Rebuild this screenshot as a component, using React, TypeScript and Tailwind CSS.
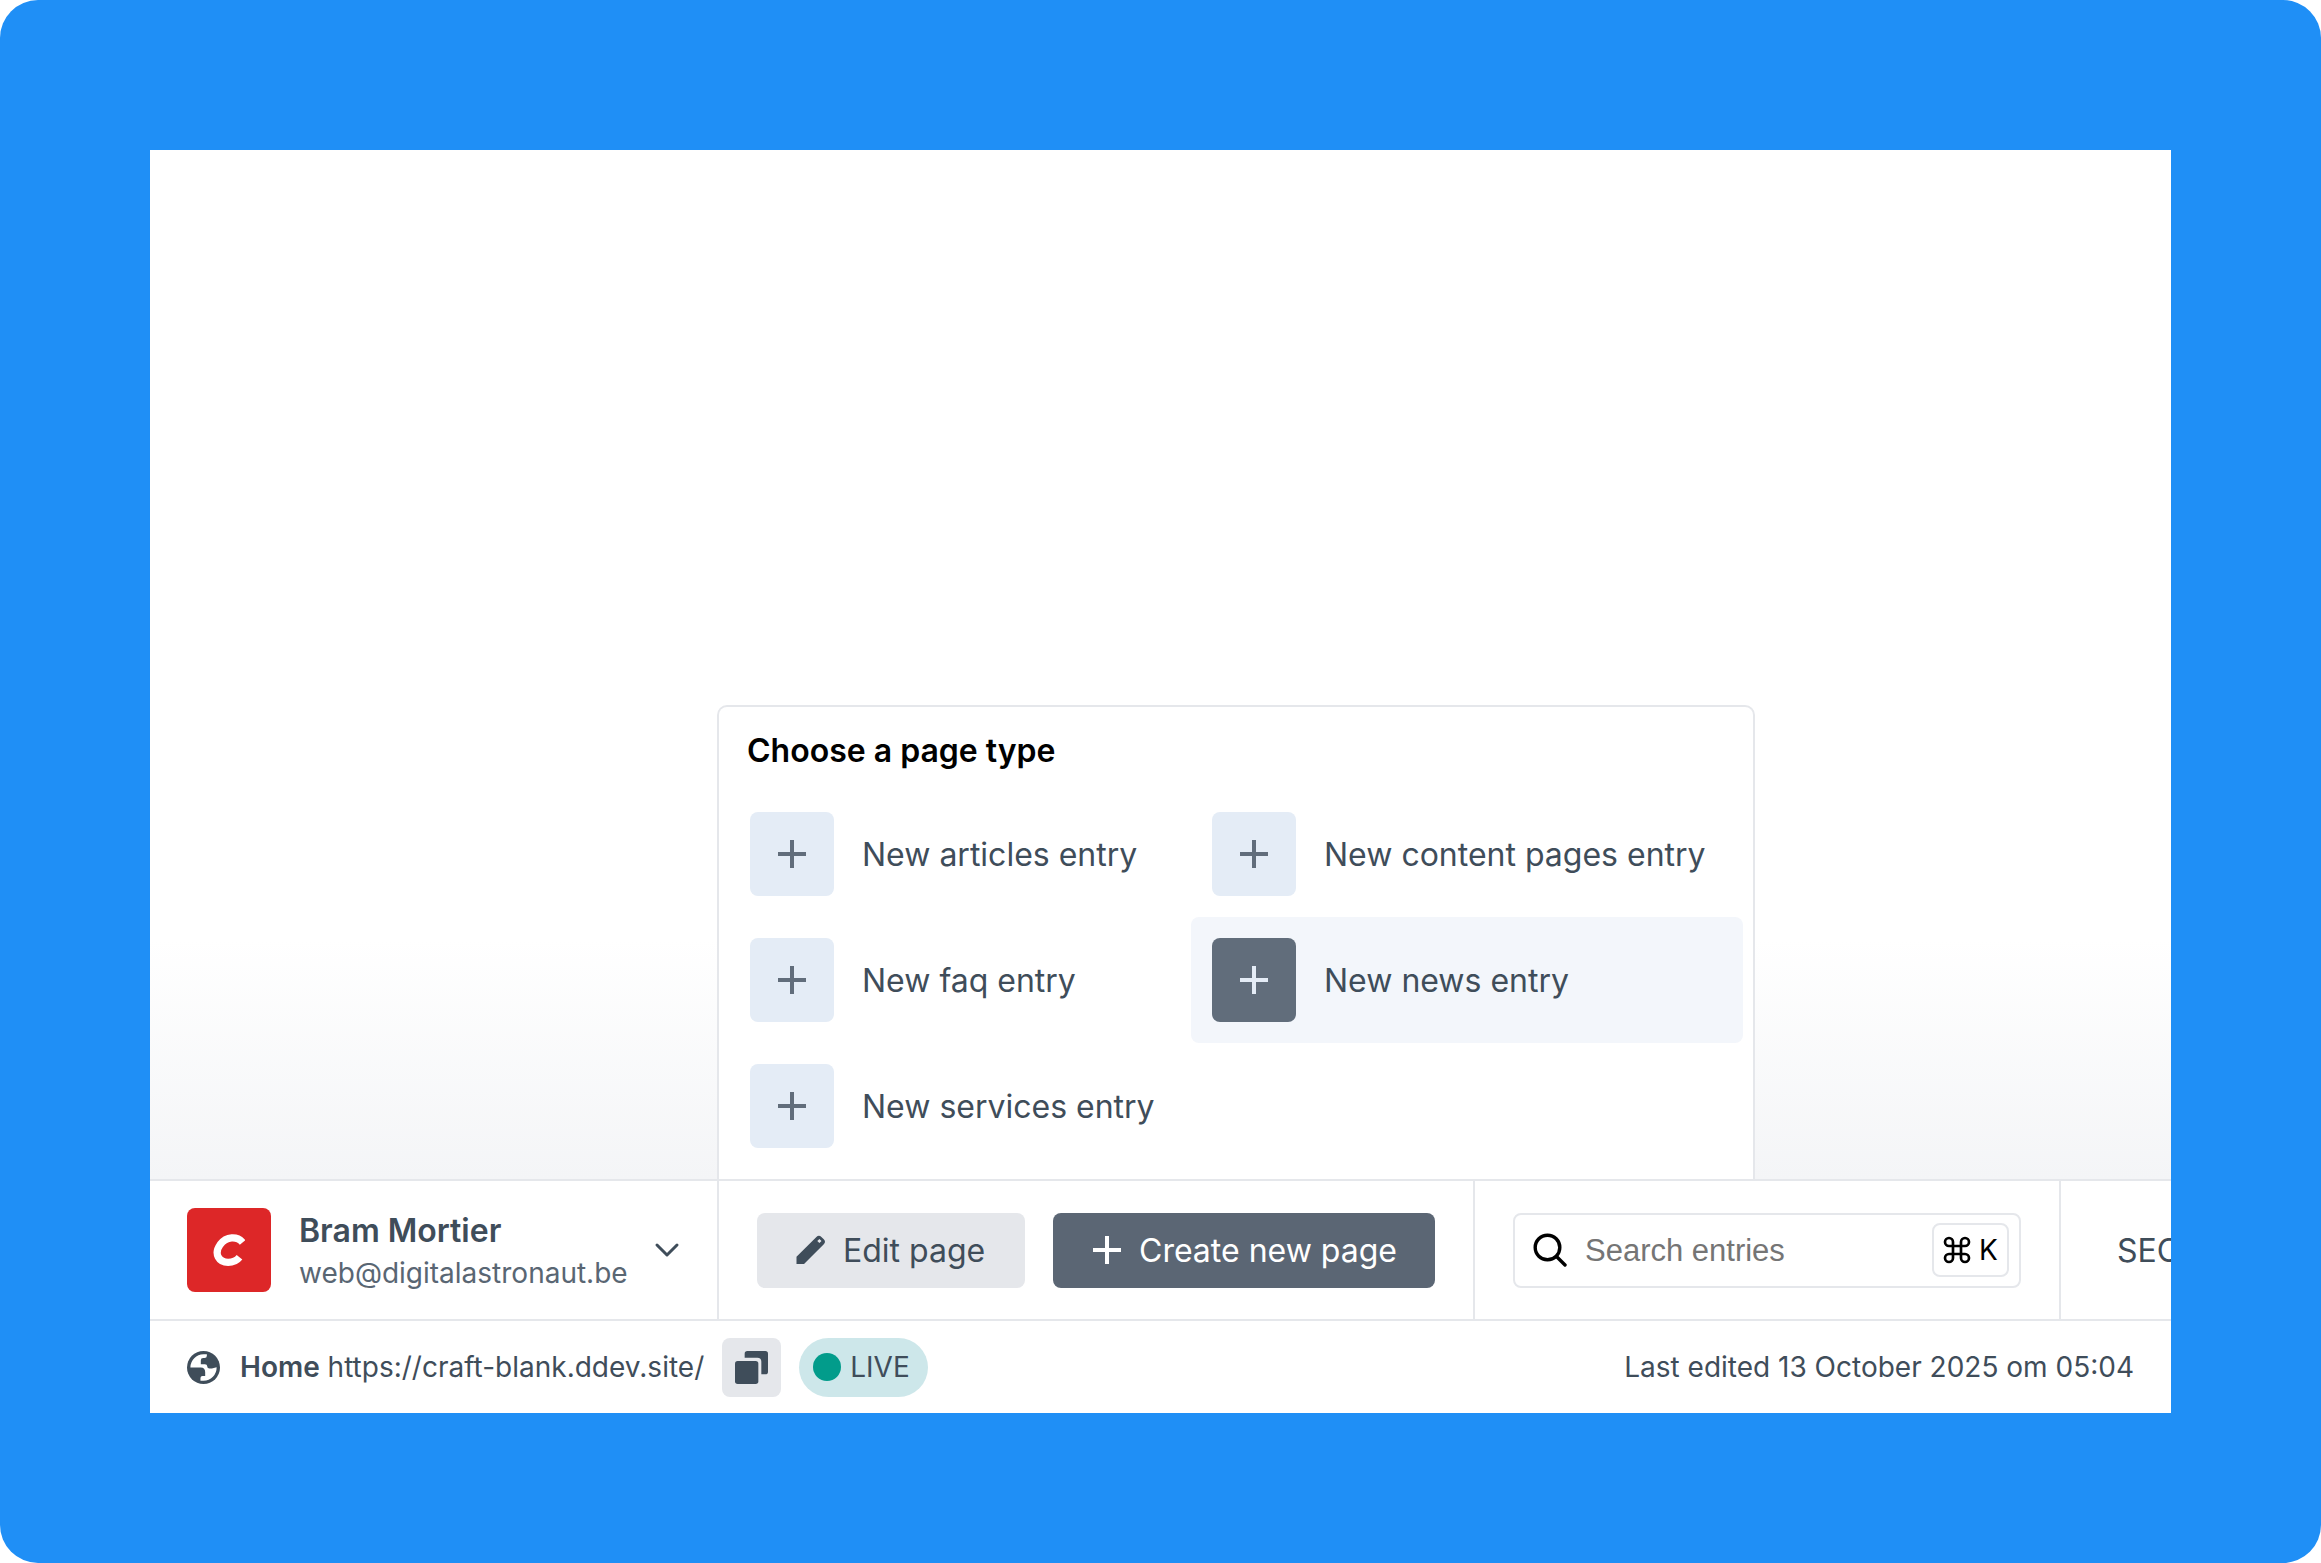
import React from "react";
import { Command } from "lucide-react";

function PlusIcon({ className }: { className?: string }) {
  return (
    <svg viewBox="0 0 32 32" className={className} fill="none" stroke="currentColor" strokeWidth="4" aria-hidden="true">
      <path d="M16 2v28M2 16h28" />
    </svg>
  );
}

function PencilIcon() {
  return (
    <svg viewBox="0 0 32 32" className="size-8 shrink-0" fill="currentColor" fillRule="evenodd" aria-hidden="true">
      <path d="M1.5 30V22.7L21.4 2.9a3.6 3.6 0 0 1 5 0l2.4 2.4a3.6 3.6 0 0 1 0 5L9 30ZM24.4 4.9l-2.1 2.1 2.1 2.1 2.1-2.1Z" />
    </svg>
  );
}

function CraftLogo() {
  return (
    <svg viewBox="0 0 93 92" className="size-8" fill="none" stroke="currentColor" strokeWidth="21" aria-hidden="true">
      <path d="M86 24C70 5 39 6 21 30C1 58 18 82 44 82C58 82 69 77 77 67" />
    </svg>
  );
}

function ChevronIcon() {
  return (
    <svg viewBox="0 0 28 16" className="h-4 w-7" fill="none" stroke="currentColor" strokeWidth="3" strokeLinecap="round" strokeLinejoin="round" aria-hidden="true">
      <path d="M4 3l10 10 10-10" />
    </svg>
  );
}

function SearchIcon() {
  return (
    <svg viewBox="0 0 34 34" className="size-[34px] shrink-0" fill="none" stroke="currentColor" strokeWidth="3.4" strokeLinecap="round" aria-hidden="true">
      <circle cx="14.5" cy="14.5" r="12.3" />
      <path d="M23.5 23.5l8.5 8.5" />
    </svg>
  );
}

function GlobeIcon() {
  return (
    <svg viewBox="0 0 98 98" className="size-[33px] shrink-0" aria-hidden="true">
      <circle cx="49" cy="49" r="49" fill="currentColor" />
      <path
        fill="white"
        d="M10 49A39 39 0 0 1 49 10H59V14Q59 21 52 21H48Q41 21 41 28V39H53Q60 39 60 45Q60 52 67 52H74L88 48A39 39 0 0 1 49 88H40V80Q40 74 46 74H54V63Q54 49 41 49Z"
      />
    </svg>
  );
}

function CopyIcon() {
  return (
    <svg viewBox="0 0 99 99" className="size-[33px]" fill="currentColor" aria-hidden="true">
      <rect x="0" y="30" width="70" height="69" rx="8" />
      <path d="M29 20V8Q29 0 37 0H91Q99 0 99 8V62Q99 70 91 70H79V32Q79 20 67 20Z" />
    </svg>
  );
}

const pageTypes = [
  { label: "New articles entry", active: false },
  { label: "New content pages entry", active: false },
  { label: "New faq entry", active: false },
  { label: "New news entry", active: true },
  { label: "New services entry", active: false },
];

function PageTypeMenu() {
  return (
    <div className="absolute bottom-[calc(100%+2px)] -left-0.5 w-[1038px] rounded-t-[10px] border-2 border-b-0 border-[#e5e7eb] bg-white px-2.5 pt-6 pb-2.5">
      <h2 className="px-[18px] leading-10 font-semibold text-black">Choose a page type</h2>
      <div className="mt-5 grid grid-cols-[462fr_552fr]">
        {pageTypes.map((type) => (
          <button
            key={type.label}
            type="button"
            className={`flex items-center gap-7 rounded-lg p-[21px] text-left ${type.active ? "bg-[#f3f6fb]" : ""}`}
          >
            <span
              className={`flex size-[84px] shrink-0 items-center justify-center rounded-lg ${
                type.active ? "bg-[#616d7b] text-[#e4ecf6]" : "bg-[#e4ecf6] text-[#616d7b]"
              }`}
            >
              <PlusIcon className="size-8" />
            </span>
            <span className="pt-0.5 whitespace-nowrap">{type.label}</span>
          </button>
        ))}
      </div>
    </div>
  );
}

export default function App() {
  return (
    <div className="flex min-h-screen flex-col rounded-[38px] bg-[#1f8ff6] p-[150px] font-['Inter',sans-serif] text-[32px] leading-10 text-[#3f4d5a]">
      <div className="flex grow flex-col overflow-hidden bg-white">
        <main className="flex grow flex-col justify-end">
          <div className="h-60 bg-linear-to-b from-white to-[#f4f5f7]" />
        </main>

        <div className="flex h-[142px] border-y-2 border-[#e5e7eb] bg-white">
          <button type="button" className="flex w-[569px] shrink-0 items-center border-r-2 border-[#e5e7eb] pr-9 pl-[37px] text-left">
            <span className="flex size-[84px] shrink-0 items-center justify-center rounded-lg bg-[#dd2728] text-white">
              <CraftLogo />
            </span>
            <span className="ml-7 flex grow flex-col pt-1">
              <span className="leading-[42px] font-semibold">Bram Mortier</span>
              <span className="text-[28px] leading-[42px] text-[#596673]">web@digitalastronaut.be</span>
            </span>
            <ChevronIcon />
          </button>

          <div className="relative flex shrink-0 items-center gap-7 border-r-2 border-[#e5e7eb] px-[38px]">
            <PageTypeMenu />
            <a href="#edit" className="flex h-[75px] w-[268px] items-center gap-4 rounded-lg bg-[#e5e7eb] px-[38px] whitespace-nowrap">
              <PencilIcon />
              <span className="pt-0.5">Edit page</span>
            </a>
            <button type="button" className="flex h-[75px] items-center gap-4 rounded-lg bg-[#5b6674] px-[38px] whitespace-nowrap text-white">
              <PlusIcon className="size-8" />
              <span className="pt-0.5">Create new page</span>
            </button>
          </div>

          <div className="flex shrink-0 items-center border-r-2 border-[#e5e7eb] px-[38px]">
            <label className="flex h-[75px] w-[508px] items-center rounded-lg border-2 border-[#e5e7eb] pr-2.5 pl-[18px] text-black">
              <SearchIcon />
              <input
                type="text"
                aria-label="Search entries"
                placeholder="Search entries"
                className="ml-[18px] min-w-0 grow pt-0.5 font-['Liberation_Sans',sans-serif] text-[31px] outline-none placeholder:text-[#757575]"
              />
              <kbd className="flex h-[54px] w-[77px] shrink-0 items-center justify-center gap-1.5 rounded-lg border-2 border-[#e5e7eb] pr-0.5 font-['Inter',sans-serif] text-[28px]">
                <Command className="size-8" strokeWidth={2} aria-hidden="true" />
                K
              </kbd>
            </label>
          </div>

          <div className="flex shrink-0 items-center px-14">
            <a href="#seo" className="pt-0.5">SEO</a>
          </div>
        </div>

        <footer className="flex h-[92px] items-center bg-white px-[37px] text-[28px]">
          <GlobeIcon />
          <p className="ml-5 whitespace-nowrap">
            <strong className="font-semibold">Home</strong> https://craft-blank.ddev.site/
          </p>
          <button type="button" aria-label="Copy URL" className="ml-[18px] flex size-[59px] items-center justify-center rounded-lg bg-[#e5e7eb]">
            <CopyIcon />
          </button>
          <span className="ml-[18px] flex h-[59px] items-center gap-[9px] rounded-full bg-[#cde7ea] pr-[18px] pl-3.5">
            <span className="size-7 rounded-full bg-[#029c8b]" />
            LIVE
          </span>
          <p className="ml-auto whitespace-nowrap">Last edited 13 October 2025 om 05:04</p>
        </footer>
      </div>
    </div>
  );
}
